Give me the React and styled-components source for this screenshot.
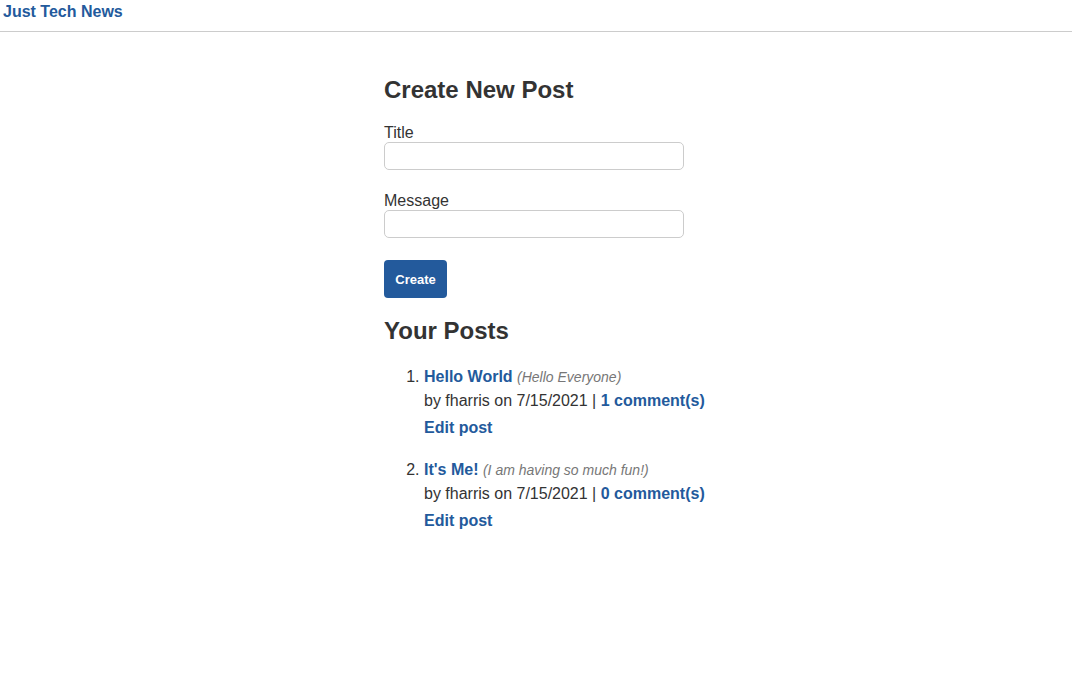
import * as React from "react";
import styled, { createGlobalStyle } from "styled-components";

const colors = {
  text: "#333",
  link: "#235a9c",
  muted: "#777",
  border: "#ccc",
};

const GlobalStyle = createGlobalStyle`
  body {
    margin: 0;
    font-family: "Liberation Sans", Arial, sans-serif;
    color: ${colors.text};
    background: #fff;
  }
`;

const Header = styled.header`
  height: 32px;
  border-bottom: 1px solid ${colors.border};
  padding: 3px 3px 0;
  box-sizing: border-box;

  a {
    color: ${colors.link};
    font-weight: 700;
    font-size: 16px;
    text-decoration: none;
  }
`;

const Main = styled.main`
  width: 304px;
  margin: 0 auto;
  padding-top: 44px;
`;

const Heading = styled.h2`
  font-size: 24px;
  font-weight: 700;
  margin: 0 0 ${(p) => p.$gap || "20px"};
`;

const Form = styled.form`
  display: flex;
  flex-direction: column;
`;

const Label = styled.label`
  font-size: 16px;
  line-height: 18px;
`;

const Input = styled.input`
  width: 300px;
  height: 28px;
  box-sizing: border-box;
  border: 1px solid ${colors.border};
  border-radius: 5px;
  margin: 0 0 22px;
  font: inherit;
`;

const Button = styled.button`
  align-self: flex-start;
  width: 63px;
  height: 38px;
  border: none;
  border-radius: 4px;
  background: ${colors.link};
  color: #fff;
  font-family: "Liberation Sans", Arial, sans-serif;
  font-weight: 700;
  font-size: 13px;
  margin-bottom: 19px;
`;

const PostList = styled.ol`
  margin: 0;
  padding-left: 40px;
  font-size: 16px;
  white-space: nowrap;
`;

const Post = styled.li`
  margin-bottom: 18px;
  line-height: 24px;

  a {
    color: ${colors.link};
    font-weight: 700;
    text-decoration: none;
  }
`;

const Sub = styled.em`
  color: ${colors.muted};
  font-size: 14px;
`;

const Meta = styled.div``;

const EditLink = styled.a`
  display: block;
  margin-top: 3px;
`;

const posts = [
  { title: "Hello World", subtitle: "Hello Everyone", comments: 1 },
  { title: "It's Me!", subtitle: "I am having so much fun!", comments: 0 },
];

export default function App() {
  return (
    <>
      <GlobalStyle />
      <Header>
        <a href="#">Just Tech News</a>
      </Header>
      <Main>
        <Heading>Create New Post</Heading>
        <Form onSubmit={(e) => e.preventDefault()}>
          <Label htmlFor="title">Title</Label>
          <Input id="title" type="text" />
          <Label htmlFor="message">Message</Label>
          <Input id="message" type="text" />
          <Button type="submit">Create</Button>
        </Form>
        <Heading $gap="20px">Your Posts</Heading>
        <PostList>
          {posts.map((post, index) => (
            <Post key={index}>
              <a href="#">{post.title}</a> <Sub>({post.subtitle})</Sub>
              <Meta>
                by fharris on 7/15/2021 | <a href="#">{post.comments} comment(s)</a>
              </Meta>
              <EditLink href="#">Edit post</EditLink>
            </Post>
          ))}
        </PostList>
      </Main>
    </>
  );
}
